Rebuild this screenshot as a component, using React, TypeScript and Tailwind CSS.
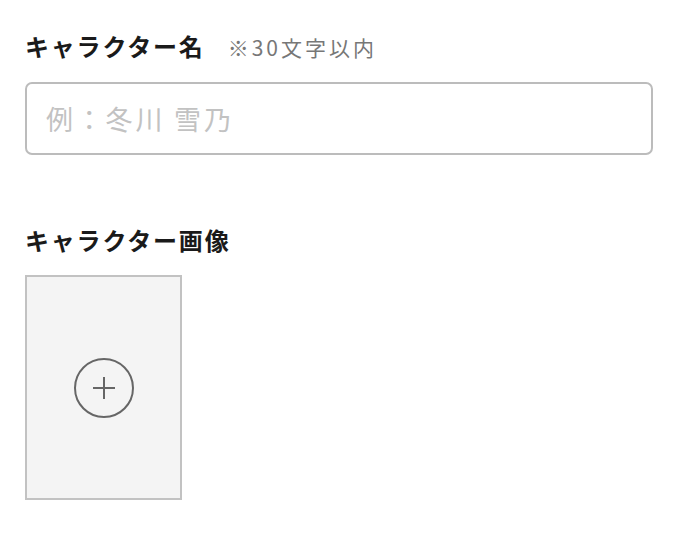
import React from "react";

const font = { fontFamily: '"Noto Sans CJK JP", "Noto Sans", sans-serif' };

function App() {
  return (
    <div className="w-[682px] h-[544px] bg-white px-[25px] pt-[30px]" style={font}>
      <div className="flex items-baseline">
        <span className="text-[24px] leading-[32px] font-bold tracking-[1.8px] text-[#1a1a1a]">キャラクター名</span>
        <span className="ml-[23px] text-[21px] leading-[32px] tracking-[3px] text-[#777]">※30文字以内</span>
      </div>
      <input
        className="mt-[19px] w-[628px] h-[73px] border-2 border-[#bcbcbc] rounded-[7px] px-[19px] text-[27px] tracking-[2.8px] placeholder:text-[#c2c2c2] outline-none"
        placeholder="例：冬川 雪乃"
      />
      <div className="mt-[69px] text-[24px] leading-[32px] font-bold tracking-[1.8px] text-[#1a1a1a]">キャラクター画像</div>
      <button className="mt-[19px] w-[157px] h-[225px] border-2 border-[#c2c2c2] bg-[#f4f4f4] flex items-center justify-center">
        <svg width="62" height="62" viewBox="0 0 62 62" fill="none">
          <circle cx="31" cy="31" r="29" stroke="#666" strokeWidth="2" />
          <path d="M20 31H42M31 20V42" stroke="#666" strokeWidth="2" />
        </svg>
      </button>
    </div>
  );
}

export default App;
